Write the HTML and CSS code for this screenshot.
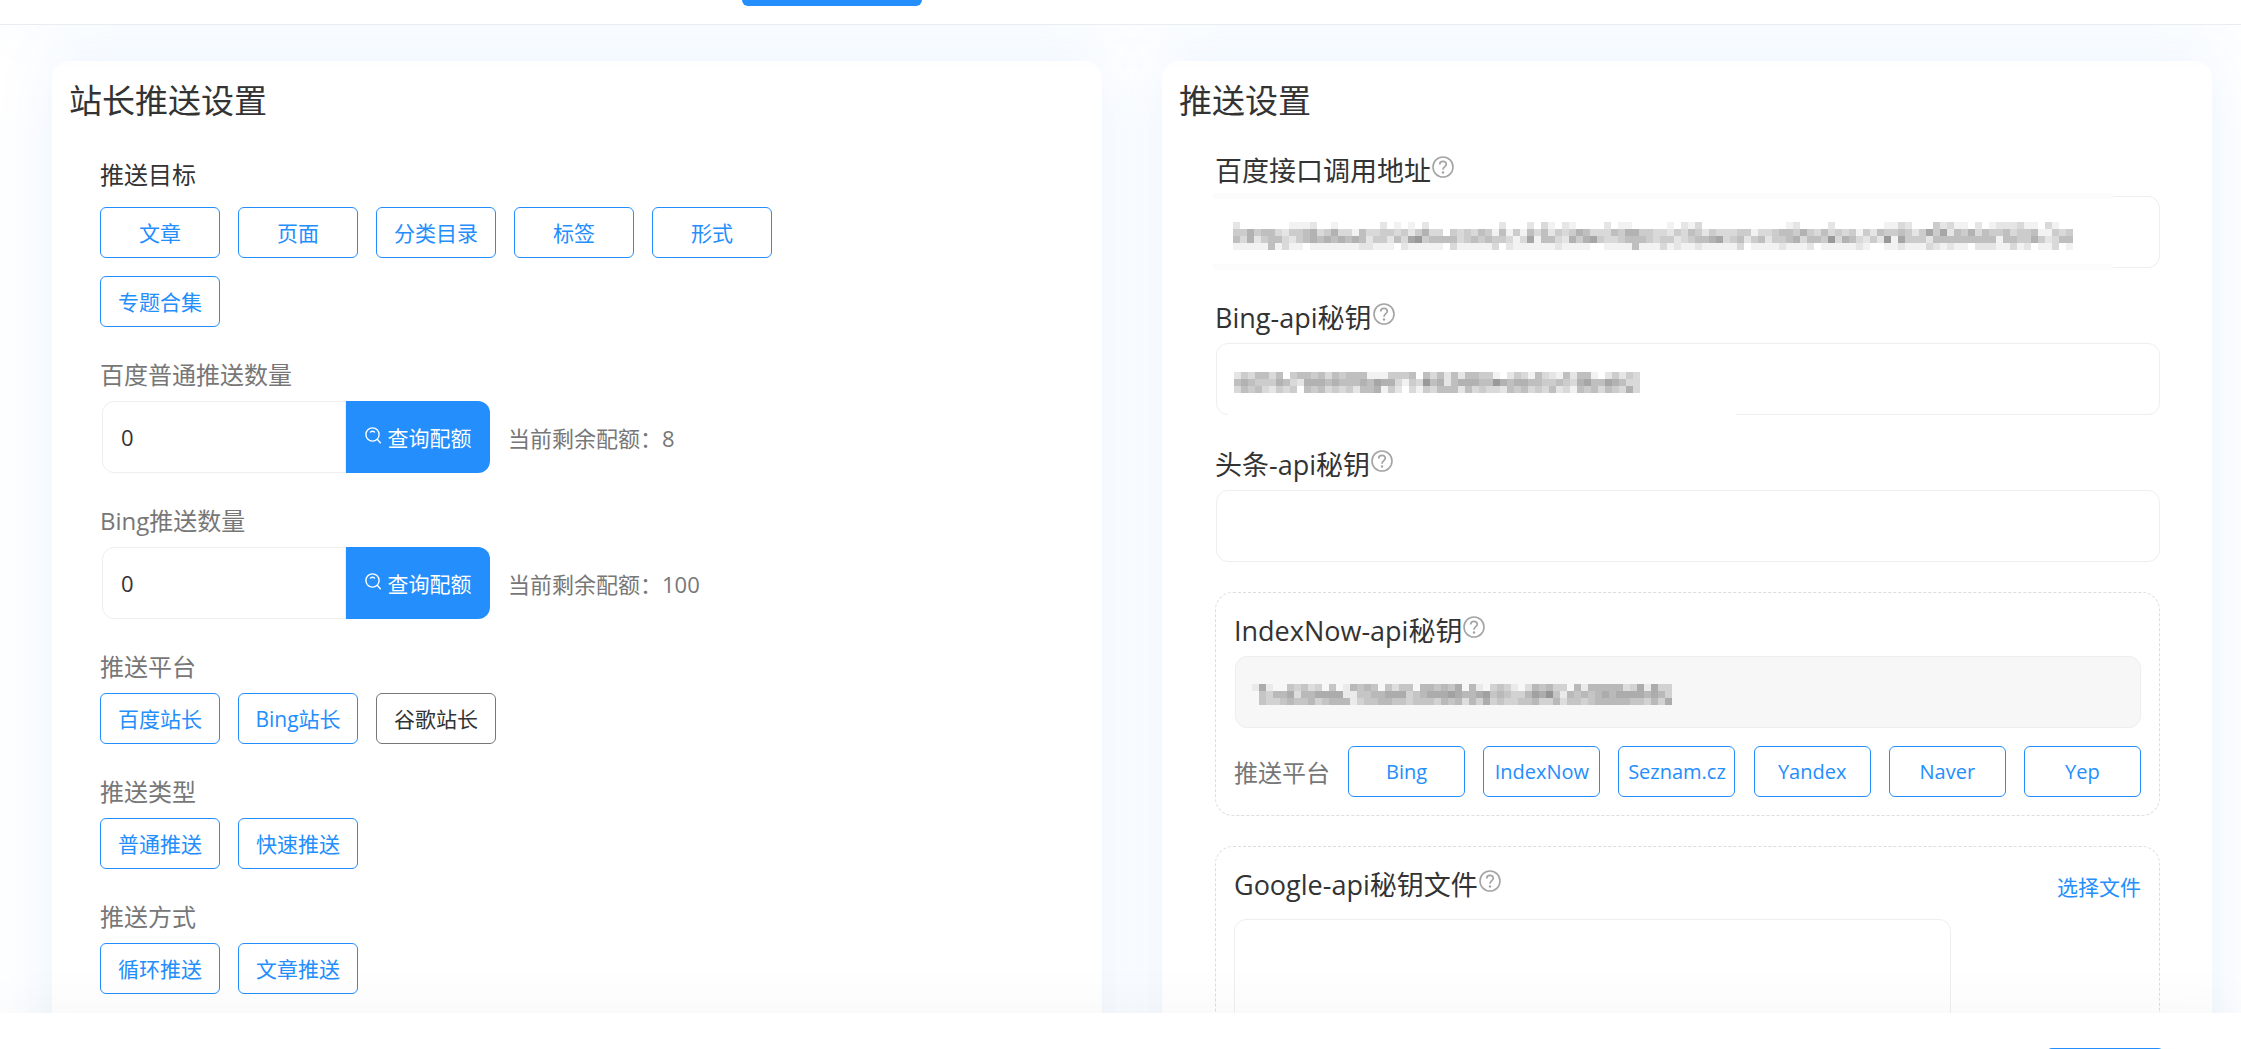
FILE: index.html
```html
<!DOCTYPE html>
<html lang="zh-CN">
<head>
    <meta charset="UTF-8">
    <meta name="viewport" content="width=device-width, initial-scale=1.0">
    <title>推送设置</title>
    <link rel="stylesheet" href="styles.css">
</head>
<body>

<svg class="sprite" aria-hidden="true">
    <symbol id="icon-help" viewBox="0 0 22 22">
        <g fill="none" stroke="currentColor">
            <circle cx="11" cy="11" r="10" stroke-width="1.6"/>
            <path d="M7.700 8.600c0-2 1.300-3.300 3.300-3.300s3.300 1.200 3.300 3c0 2.400-3.300 2.500-3.300 5.400" stroke-width="1.700"/>
        </g>
        <circle cx="11" cy="16.500" r="1.200" fill="currentColor"/>
    </symbol>
    <symbol id="icon-search" viewBox="0 0 16 17">
        <g fill="none" stroke="currentColor" stroke-width="1.400" stroke-linecap="round">
            <circle cx="7.500" cy="7.500" r="6.600"/>
            <path d="M12.300 12.300l3 3.400M5.500 5q2-1.400 4 0"/>
        </g>
    </symbol>
</svg>

<header class="topbar">
    <button class="topbar-button" type="button" aria-label="保存设置"></button>
</header>

<main class="content">
    <!-- 站长推送设置 -->
    <section class="card">
        <h2 class="card-title">站长推送设置</h2>
        <div class="card-body">
            <div class="block">
                <h3 class="block-title dark">推送目标</h3>
                <div class="chips">
                    <button class="chip" type="button">文章</button>
                    <button class="chip" type="button">页面</button>
                    <button class="chip" type="button">分类目录</button>
                    <button class="chip" type="button">标签</button>
                    <button class="chip" type="button">形式</button>
                    <button class="chip" type="button">专题合集</button>
                </div>
            </div>

            <div class="block">
                <label class="block-title" for="baidu-count">百度普通推送数量</label>
                <div class="quota">
                    <input type="text" id="baidu-count" class="input-field" value="0">
                    <button class="quota-button" type="button"><svg class="search-icon"><use href="#icon-search"/></svg>查询配额</button>
                    <span class="quota-text">当前剩余配额：8</span>
                </div>
            </div>

            <div class="block">
                <label class="block-title" for="bing-count">Bing推送数量</label>
                <div class="quota">
                    <input type="text" id="bing-count" class="input-field" value="0">
                    <button class="quota-button" type="button"><svg class="search-icon"><use href="#icon-search"/></svg>查询配额</button>
                    <span class="quota-text">当前剩余配额：100</span>
                </div>
            </div>

            <div class="block">
                <h3 class="block-title">推送平台</h3>
                <div class="chips">
                    <button class="chip" type="button">百度站长</button>
                    <button class="chip" type="button">Bing站长</button>
                    <button class="chip off" type="button">谷歌站长</button>
                </div>
            </div>

            <div class="block">
                <h3 class="block-title">推送类型</h3>
                <div class="chips">
                    <button class="chip" type="button">普通推送</button>
                    <button class="chip" type="button">快速推送</button>
                </div>
            </div>

            <div class="block">
                <h3 class="block-title">推送方式</h3>
                <div class="chips">
                    <button class="chip" type="button">循环推送</button>
                    <button class="chip" type="button">文章推送</button>
                </div>
            </div>
        </div>
    </section>

    <!-- 推送设置 -->
    <section class="card">
        <h2 class="card-title">推送设置</h2>
        <div class="card-body api">
            <div class="field">
                <label class="field-label" for="baidu-url">百度接口调用地址<svg class="help-icon"><use href="#icon-help"/></svg></label>
                <div class="input-wrap">
                    <input type="text" id="baidu-url" class="input-field">
                    <div class="cover cover-url"><svg class="mosaic" data-key="url"></svg></div>
                </div>
            </div>

            <div class="field">
                <label class="field-label" for="bing-key">Bing-api秘钥<svg class="help-icon"><use href="#icon-help"/></svg></label>
                <div class="input-wrap">
                    <input type="text" id="bing-key" class="input-field">
                    <div class="cover cover-bing"><svg class="mosaic" data-key="bing"></svg></div>
                </div>
            </div>

            <div class="field">
                <label class="field-label" for="toutiao-key">头条-api秘钥<svg class="help-icon"><use href="#icon-help"/></svg></label>
                <div class="input-wrap">
                    <input type="text" id="toutiao-key" class="input-field">
                </div>
            </div>

            <div class="group">
                <label class="field-label" for="indexnow-key">IndexNow-api秘钥<svg class="help-icon"><use href="#icon-help"/></svg></label>
                <div class="input-wrap">
                    <input type="text" id="indexnow-key" class="input-field" disabled>
                    <div class="cover cover-indexnow"><svg class="mosaic" data-key="indexnow"></svg></div>
                </div>
                <div class="engines">
                    <span class="engines-title">推送平台</span>
                    <button class="chip" type="button">Bing</button>
                    <button class="chip" type="button">IndexNow</button>
                    <button class="chip" type="button">Seznam.cz</button>
                    <button class="chip" type="button">Yandex</button>
                    <button class="chip" type="button">Naver</button>
                    <button class="chip" type="button">Yep</button>
                </div>
            </div>

            <div class="group">
                <div class="group-head">
                    <label class="field-label" for="google-key">Google-api秘钥文件<svg class="help-icon"><use href="#icon-help"/></svg></label>
                    <a class="file-link" href="#">选择文件</a>
                </div>
                <textarea id="google-key" class="key-file"></textarea>
            </div>
        </div>
    </section>
</main>

<footer class="bottombar">
    <button class="bottombar-button" type="button" aria-label="保存"></button>
</footer>

<script src="mosaic.js"></script>
</body>
</html>
```
FILE: mosaic.js
```js
// 打码的内容：每个数字是一格的深浅
const MOSAICS = {
    url: [
        '200000001112001000000201010200000000002000203102100002011000001021300000000000012000020000000113200042311020122231103100',
        '446455324456346331533443424633043435415141535243465333546644332435424333441334554643534341425445424747254635445344511434',
        '536245532456565656524425378455553454544313715532646743345554344234556734524524456355483653242817444255555555515544642355',
        '111115131101111111221110211111031111130211111121111001111511131211211111301111211120111112100112111321211022211312011301'
    ],
    bing: [
        '2435535045545354555111444505352525544102431532152551024243',
        '5654446532666565556576631438562566655865665544543675576533',
        '3545324340545343425561420314355525343325453435231545354363'
    ],
    indexnow: [
        '161004342304015454042440554546051034310254533051555552361633',
        '043556255666611445566634566676556745433576841545456566665653',
        '043345445345551344554434443545253634334453352443455555443536'
    ]
};
const CELL = 7;

document.querySelectorAll('.mosaic').forEach(svg => {
    const rows = MOSAICS[svg.dataset.key];
    let cells = '';
    rows.forEach((row, y) => {
        [...row].forEach((level, x) => {
            cells += `<rect x="${x * CELL}" y="${y * CELL}" width="${CELL}" height="${CELL}" fill-opacity="${level * 0.05}"/>`;
        });
    });
    svg.setAttribute('width', rows[0].length * CELL);
    svg.setAttribute('height', rows.length * CELL);
    svg.innerHTML = cells;
});
```
FILE: styles.css
```css
* {
    box-sizing: border-box;
}
body {
    margin: 0;
    height: 100vh;
    display: flex;
    flex-direction: column;
    overflow: hidden;
    background-color: #fff;
    color: #333;
    font-family: "Open Sans", "Noto Sans CJK SC", sans-serif;
    font-size: 21px;
}
button, input, textarea {
    font: inherit;
}
button {
    cursor: pointer;
}
h2, h3 {
    margin: 0;
    font-weight: 400;
}
.sprite {
    display: none;
}

/* 顶部 */
.topbar {
    position: relative;
    z-index: 2;
    flex: none;
    display: flex;
    align-items: flex-end;
    height: 25px;
    padding: 0 742px 18px;
    background-color: #fff;
    border-bottom: 1px solid #e9edf2;
    box-shadow: 0 0 60px rgba(35, 142, 252, 0.06);
}
.topbar-button {
    flex: none;
    width: 180px;
    height: 48px;
    border: none;
    border-radius: 6px;
    background-color: #238efc;
}

/* 卡片 */
.content {
    flex: 1;
    min-height: 0;
    display: grid;
    grid-template-columns: 1fr 1fr;
    gap: 60px;
    padding: 36px 29px 0 52px;
    overflow: hidden;
}
.card {
    height: max-content;
    min-height: 1200px;
    padding-top: 18px;
    background-color: #fff;
    border-radius: 18px;
    box-shadow: 0 0 60px rgba(35, 142, 252, 0.1);
}
.card-title {
    padding: 0 17px;
    font-size: 33px;
    line-height: 44px;
}
.card-body {
    display: flex;
    flex-direction: column;
    gap: 30px;
    padding: 34px 48px;
}
.card-body.api {
    padding: 28px 52px 28px 53px;
}

/* 按钮组 */
.block-title {
    display: block;
    margin-bottom: 8px;
    color: #777;
    font-size: 24px;
    line-height: 36px;
}
.block-title.dark {
    margin-bottom: 14px;
    color: #333;
}
.chips {
    display: flex;
    flex-wrap: wrap;
    gap: 18px;
    max-width: 720px;
}
.chip {
    width: 120px;
    height: 51px;
    padding: 0 0 2px;
    border: 1px solid #238efc;
    border-radius: 6px;
    background-color: #fff;
    color: #238efc;
}
.chip.off {
    border-color: #777;
    color: #333;
}

/* 输入框 */
.input-field {
    display: block;
    width: 100%;
    height: 72px;
    padding: 0 18px;
    border: 1px solid #eee;
    border-radius: 12px;
    background-color: #fff;
    color: #333;
}
.input-field:disabled {
    background-color: #f7f7f7;
}
.quota {
    display: flex;
    align-items: center;
    margin-left: 2px;
}
.quota .input-field {
    width: 244px;
    border-radius: 12px 0 0 12px;
    font-size: 22px;
}
.quota-button {
    display: flex;
    align-items: center;
    justify-content: center;
    gap: 7px;
    width: 144px;
    height: 72px;
    padding: 0;
    border: none;
    border-radius: 0 12px 12px 0;
    background-color: #238efc;
    color: #fff;
}
.search-icon {
    width: 16px;
    height: 17px;
    margin-bottom: 3px;
}
.quota-text {
    margin-left: 18px;
    color: #777;
    font-size: 22px;
}

/* 秘钥 */
.field-label {
    display: flex;
    align-items: flex-start;
    margin-bottom: 5px;
    font-size: 27px;
    line-height: 40px;
}
.help-icon {
    width: 22px;
    height: 22px;
    margin: 5px 0 0 1px;
    color: #a4a4a4;
}
.input-wrap {
    position: relative;
    margin-left: 1px;
}
.group {
    padding: 18px;
    border: 1px dashed #ddd;
    border-radius: 18px;
}
.group-head {
    display: flex;
    align-items: center;
    justify-content: space-between;
    margin-bottom: 14px;
}
.group-head .field-label {
    margin-bottom: 0;
}
.file-link {
    padding-top: 2px;
    color: #238efc;
    text-decoration: none;
}
.engines {
    display: flex;
    align-items: center;
    justify-content: space-between;
    margin-top: 18px;
}
.engines-title {
    color: #777;
    font-size: 24px;
}
.engines .chip {
    width: 117px;
    padding: 0;
    font-size: 20px;
}
.key-file {
    display: block;
    width: 79%;
    height: 200px;
    padding: 18px;
    border: 1px solid #eee;
    border-radius: 12px;
    resize: none;
}

/* 马赛克 */
.cover {
    position: absolute;
    pointer-events: none;
}
.mosaic {
    display: block;
    shape-rendering: crispEdges;
}
.cover-url {
    top: -3px;
    left: -3px;
    padding: 23px 40px 14px 20px;
    background-color: #fff;
    border: solid #fcfcfc;
    border-width: 6px 0;
}
.cover-bing {
    top: 29px;
    left: 12px;
    padding: 0 96px 23px 6px;
    background-color: #fff;
}
.cover-indexnow {
    top: 28px;
    left: 17px;
}

/* 底部 */
.bottombar {
    position: relative;
    z-index: 2;
    flex: none;
    display: flex;
    justify-content: flex-end;
    height: 36px;
    padding: 35px 77px 0;
    background-color: #fff;
    box-shadow: 0 0 60px rgba(0, 0, 0, 0.05);
}
.bottombar-button {
    flex: none;
    width: 118px;
    height: 48px;
    border: none;
    border-radius: 6px;
    background-color: #238efc;
}
```
